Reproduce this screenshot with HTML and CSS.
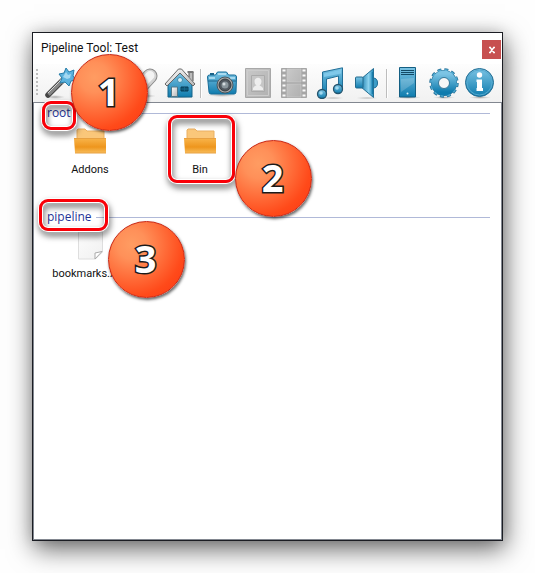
FILE: index.html
```html
<!DOCTYPE html>
<html lang="en">
<head>
<meta charset="utf-8">
<title>Pipeline Tool: Test</title>
<link rel="stylesheet" href="styles.css">
</head>
<body>
<svg class="defs" width="0" height="0" aria-hidden="true">
  <defs>
    <linearGradient id="blue" x1="0" y1="0" x2="0" y2="1"><stop offset="0" stop-color="#7cc4e4"/><stop offset="1" stop-color="#0f7cae"/></linearGradient>
    <linearGradient id="blueH" x1="0" y1="0" x2="1" y2="0"><stop offset="0" stop-color="#1c7fae"/><stop offset=".6" stop-color="#8bd2ee"/><stop offset="1" stop-color="#1b86b8"/></linearGradient>
    <linearGradient id="grey" x1="0" y1="0" x2="1" y2="1"><stop offset="0" stop-color="#c9c9c9"/><stop offset="1" stop-color="#b0b0b0"/></linearGradient>
    <linearGradient id="metal" x1="0" y1="0" x2="1" y2="1"><stop offset="0" stop-color="#ffffff"/><stop offset="1" stop-color="#b5b5b5"/></linearGradient>
    <linearGradient id="folderFront" x1="0" y1="0" x2="0" y2="1"><stop offset="0" stop-color="#f9b54c"/><stop offset=".6" stop-color="#ee961d"/><stop offset="1" stop-color="#f8bd5a"/></linearGradient>
    <linearGradient id="paper" x1="0" y1="0" x2="1" y2="1"><stop offset="0" stop-color="#fcfcfc"/><stop offset="1" stop-color="#f0f0f0"/></linearGradient>
    <radialGradient id="ground"><stop offset="0" stop-color="#777" stop-opacity=".6"/><stop offset="1" stop-color="#999" stop-opacity="0"/></radialGradient>
    <symbol id="folder" viewBox="0 0 32 28">
      <path d="M3 11V2l1-1h7l2 2h17v8z" fill="#fac77a" stroke="#eab062"/>
      <path d="M0 10h32v15H1z" fill="url(#folderFront)"/>
      <path d="M0 10.500h32M1 25h31" stroke="#e8a143" fill="none"/>
    </symbol>
  </defs>
</svg>

<main class="window">
  <header class="titlebar">
    <h1 class="title">Pipeline Tool: Test</h1>
    <button class="close" type="button" aria-label="Close"><svg viewBox="0 0 8 8" width="8" height="8"><path d="M1 1.500h2M5 1.500h2M1 6.500h2M5 6.500h2M2.200 1.500l3.600 5M5.800 1.500l-3.600 5" stroke="#fff" stroke-width="1.400"/></svg></button>
  </header>

  <nav class="toolbar" aria-label="Tools">
    <span class="grip"></span>
    <button class="tool" type="button" aria-label="Wizard"><svg viewBox="0 0 32 32">
      <ellipse cx="11" cy="30" rx="10" ry="2" fill="url(#ground)"/>
      <path d="M4 28L20 12" stroke="#444" stroke-width="5.500" stroke-linecap="round"/><path d="M4.500 27.500L20 12" stroke="#858585" stroke-width="3.500"/><path d="M4 26L18 12" stroke="#d5d5d5" stroke-width="1"/><path d="M17 15l4-4" stroke="#eee" stroke-width="4"/>
      <path d="M22 1l3 4 5-2-1 6 3 4-5 1-2 5-4-4-5 1 2-5-3-4 5-1z" fill="#5bb2de" stroke="#277da9"/><path d="M22 5l2 3 3-1-1 4-3 1-4-2z" fill="#a3d8f1"/></svg></button>
    <span class="divider"></span>
    <button class="tool" type="button" aria-label="Brush"><svg viewBox="0 0 32 32"><path d="M24 7L13 19" stroke="#999" stroke-width="4"/><path d="M13 17c-6-1-6 8-8 7 6 4 12 0 11-4z" fill="url(#blue)"/></svg></button>
    <span class="divider"></span>
    <button class="tool" type="button" aria-label="Eraser"><svg viewBox="0 0 32 32"><ellipse cx="16" cy="29" rx="12" ry="2" fill="url(#ground)"/><path d="M22 9L10 22" stroke="#8c8c8c" stroke-width="15" stroke-linecap="round"/><path d="M22 9L10 22" stroke="#d2d2d2" stroke-width="13" stroke-linecap="round"/><path d="M22 8.500L9 22" stroke="#f3f3f3" stroke-width="9" stroke-linecap="round"/></svg></button>
    <button class="tool" type="button" aria-label="Home"><svg viewBox="0 0 32 32">
      <ellipse cx="16" cy="30" rx="16" ry="1.500" fill="url(#ground)"/>
      <path d="M25 10V5h4v9" fill="#bbb" stroke="#555"/><path d="M23.500 5h6" stroke="#777" stroke-width="2"/>
      <path d="M4 17L16 5l12 12v13H4z" fill="url(#blue)" stroke="#176589"/>
      <path d="M1 17L14.500 2h3L31 17l-2 2L16 6 3 19z" fill="url(#metal)" stroke="#686868"/>
      <circle cx="16" cy="13" r="2.500" fill="#d5edf6" stroke="#438eac"/>
      <path d="M7.500 20h6v9.500h-6z" fill="url(#metal)" stroke="#507788"/><path d="M17 20h7v4h-7z" fill="#075477" stroke="#0b3d57"/><path d="M20.500 20v4M17 22h7" stroke="#276c8b" stroke-width=".6"/></svg></button>
    <span class="divider"></span>
    <button class="tool" type="button" aria-label="Camera"><svg viewBox="0 0 32 32">
      <ellipse cx="16" cy="28" rx="15" ry="2" fill="url(#ground)"/>
      <path d="M1.500 10q0-2 2-2h6l2-3h9l2 3h6q2 0 2 2l-.500 15q0 2-2 2h-23q-2 0-2-2z" fill="url(#blue)" stroke="#176c98"/>
      <path d="M12 7h8M3 11h6M24 11h5" stroke="#bde5f5" stroke-width="1.500"/><path d="M4 7h4" stroke="#1a6288" stroke-width="2"/><path d="M2 14h28" stroke="#1b668d"/>
      <circle cx="19" cy="18" r="8" fill="#aaa" stroke="#4b5860"/><circle cx="19" cy="18" r="6" fill="#50585f" stroke="#353c40"/><circle cx="19" cy="18" r="3.500" fill="#8a969c"/><circle cx="18" cy="17" r="1.500" fill="#d4dbde"/></svg></button>
    <button class="tool" type="button" aria-label="Portrait"><svg viewBox="0 0 32 32"><path d="M3.500 1.500h25v29h-25z" fill="url(#grey)" stroke="#a8a8a8"/><path d="M5.500 3.500h21v25h-21z" fill="none" stroke="#ccc"/><path d="M9.500 8.500h13v16h-13z" fill="#c6c6c6" stroke="#aaa"/><path d="M11 23v-2q2-2.500 3.500-2.500-2-1.500-2-4c0-5 7-5 7 0q0 2.500-2 4 1.500 0 3.500 2.500v2z" fill="#eee"/></svg></button>
    <button class="tool" type="button" aria-label="Film"><svg viewBox="0 0 32 32"><path d="M3.500 1.500h25v29h-25z" fill="#a6a6a6" stroke="#a6a6a6"/><path d="M9 2h14v13H9zM9 17h14v13H9z" fill="url(#grey)" stroke="#ccc" stroke-width=".6"/><path d="M6 2.500v28M26 2.500v28" stroke="#fafafa" stroke-width="3" stroke-dasharray="2 3"/></svg></button>
    <button class="tool" type="button" aria-label="Music"><svg viewBox="0 0 32 32">
      <ellipse cx="19" cy="31" rx="12" ry="1" fill="url(#ground)"/>
      <path d="M8.500 5L28.500.800V22h-4V9l-12 3v15h-4z" fill="url(#blue)" stroke="#226f98"/><path d="M10 6.500l17-3.700v3.600L10 10z" fill="#80c9ea"/><circle cx="8" cy="27" r="4.500" fill="url(#blue)" stroke="#24536c" stroke-width="1.300"/><circle cx="24" cy="22" r="4.500" fill="url(#blue)" stroke="#24536c" stroke-width="1.300"/><circle cx="7" cy="26" r="1.800" fill="#a2d9f0"/><circle cx="23" cy="21" r="1.800" fill="#a2d9f0"/></svg></button>
    <button class="tool" type="button" aria-label="Sound"><svg viewBox="0 0 32 32">
      <ellipse cx="17" cy="31" rx="12" ry="1" fill="url(#ground)"/>
      <path d="M23 11q4.500 0 4.500 5T23 21z" fill="#3c9dc8" stroke="#1b6b95"/><path d="M11 12L23.500 1.500v29L11 20z" fill="url(#blueH)" stroke="#246f94"/><path d="M5.500 11q0-1 1-1H12q1 0 1 1v9q0 1-1 1H6.500q-1 0-1-1z" fill="url(#blue)" stroke="#226a8d"/><path d="M22.500 5v22" stroke="#187ba9" stroke-width="1.500"/></svg></button>
    <span class="divider"></span>
    <button class="tool" type="button" aria-label="Server"><svg viewBox="0 0 32 32"><ellipse cx="16" cy="30.500" rx="13" ry="1.500" fill="url(#ground)"/><path d="M7.500.500h16v29.500h-16z" fill="url(#blue)" stroke="#145f83"/><path d="M9 3.500h13M9 5.500h13M9 7.500h13" stroke="#134a65" stroke-width="1"/><path d="M9 12l13-1v5L9 25z" fill="#fff" opacity=".18"/><circle cx="15.500" cy="26.500" r="1" fill="#d8f2fc"/></svg></button>
    <button class="tool" type="button" aria-label="Settings"><svg viewBox="0 0 32 32"><ellipse cx="16" cy="30.500" rx="11" ry="1.500" fill="url(#ground)"/><circle cx="16" cy="16" r="13" fill="none" stroke="#236f96" stroke-width="3.400" stroke-dasharray="3.800 3.007"/><circle cx="16" cy="16" r="9" fill="none" stroke="#236f96" stroke-width="8"/><circle cx="16" cy="16" r="13" fill="none" stroke="#4ca5cc" stroke-width="2" stroke-dasharray="3 3.807" stroke-dashoffset="-.4"/><circle cx="16" cy="16" r="9" fill="none" stroke="url(#blue)" stroke-width="7"/><circle cx="16" cy="16" r="5.500" fill="#f8f8f8" stroke="#37799a"/></svg></button>
    <button class="tool" type="button" aria-label="Information"><svg viewBox="0 0 32 32"><ellipse cx="16" cy="30.500" rx="11" ry="1.500" fill="url(#ground)"/><circle cx="15.500" cy="15.500" r="14" fill="url(#blue)" stroke="#206b91"/><circle cx="15.500" cy="15.500" r="12.500" fill="none" stroke="#55a9cf"/><circle cx="15.500" cy="8" r="2.700" fill="#fff"/><path d="M12.500 12.500h5.500v8.500h1V24h-6.500v-3H13v-6h-.500z" fill="#fff"/></svg></button>
  </nav>

  <div class="list">
    <section class="group">
      <h2 class="group-name">root</h2>
      <ul class="items">
        <li class="item"><svg class="pic"><use href="#folder"/></svg><span>Addons</span></li>
        <li class="item"><svg class="pic"><use href="#folder"/></svg><span>Bin</span></li>
      </ul>
    </section>
    <section class="group">
      <h2 class="group-name">pipeline</h2>
      <ul class="items">
        <li class="item"><svg class="pic" viewBox="0 0 32 28"><path d="M4.500 0h24v20l-7 7h-17z" fill="url(#paper)" stroke="#dedede"/><path d="M21 27v-6l7-1.500z" fill="#fff" stroke="#aaa"/></svg><span>bookmarks.xml</span></li>
      </ul>
    </section>
  </div>

  <div class="ring ring-root"></div>
  <div class="ring ring-bin"></div>
  <div class="ring ring-pipeline"></div>
  <div class="badge badge-root">1</div>
  <div class="badge badge-bin">2</div>
  <div class="badge badge-pipeline">3</div>
</main>
</body>
</html>
```
FILE: styles.css
```css
* { box-sizing: border-box; }

body {
  margin: 0;
  padding: 32px;
  background: #fefefe;
  color: #111;
  font: 11px/16px Roboto, "Liberation Sans", sans-serif;
}

.defs { position: absolute; }

.window {
  position: relative;
  display: flex;
  flex-direction: column;
  min-height: calc(100vh - 64px);
  background: #fff;
  border: 1px solid #1b1d23;
  box-shadow: 2px 8px 24px rgba(0, 0, 0, .6), 0 0 12px rgba(0, 0, 0, .1);
}

.titlebar {
  display: flex;
  align-items: flex-start;
  justify-content: space-between;
  height: 31px;
  padding: 7px 1px 0 8px;
}

.title { margin: 0; font-size: 12px; font-weight: 400; line-height: 16px; }

.close {
  display: grid;
  place-items: center;
  width: 19px;
  height: 19px;
  padding: 0;
  border: 0;
  background: #c75050;
}

.toolbar {
  display: flex;
  align-items: center;
  gap: 4px;
  height: 38px;
  padding-left: 3px;
  background: linear-gradient(#fdfdfd, #f1f1f1);
}

.grip {
  flex: none;
  width: 2px;
  height: 28px;
  margin-right: 2px;
  background: repeating-linear-gradient(#bdbdbd 0 2px, transparent 2px 4px);
}

.tool {
  flex: none;
  width: 32px;
  height: 32px;
  padding: 0;
  border: 0;
  background: none;
}

.tool svg { display: block; width: 32px; height: 32px; }

.divider {
  flex: none;
  width: 2px;
  height: 29px;
  background: linear-gradient(90deg, #bdbdbd 50%, #fff 50%);
}

.list {
  flex: 1;
  border: 1px solid #828790;
}

.group { height: 104px; }

.group-name {
  display: flex;
  align-items: center;
  gap: 4px;
  margin: 0;
  padding: 0 11px 0 13px;
  color: #1e3296;
  font: 400 12px/20px "Open Sans", "Noto Sans", sans-serif;
}

.group-name::after {
  content: "";
  flex: 1;
  height: 1px;
  background: #b0b9d8;
}

.items {
  display: flex;
  margin: 0;
  padding: 5px 0 0 1px;
  list-style: none;
}

.item {
  display: flex;
  flex-direction: column;
  align-items: center;
  gap: 6px;
  width: 110px;
}

.pic { width: 32px; height: 28px; }

.ring {
  position: absolute;
  border: 3px solid #fa0008;
  border-radius: 9px;
  box-shadow: 0 0 0 1px #fff, inset 0 0 0 1px #fff;
  filter: drop-shadow(1px 4px 3px rgba(0, 0, 0, .6));
}

.ring-root { left: 9px; top: 68px; width: 34px; height: 29px; }
.ring-bin { left: 135px; top: 82px; width: 67px; height: 68px; }
.ring-pipeline { left: 6px; top: 166px; width: 69px; height: 32px; }

.badge {
  position: absolute;
  width: 77px;
  height: 77px;
  padding-right: 2px;
  border: 1px solid #c82512;
  border-radius: 50%;
  background: radial-gradient(circle at 30% 30%, #ff9c62 0%, #ff9059 20%, #ff4a1a 70%, #fb3510 100%);
  box-shadow: 1px 2px 3px rgba(0, 0, 0, .6);
  color: #fff;
  font: 700 38px/73px "Open Sans", sans-serif;
  text-align: center;
  -webkit-text-stroke: 3px #1b1b1b;
  paint-order: stroke fill;
}

.badge-root { left: 38px; top: 21px; }
.badge-bin { left: 202px; top: 107px; }
.badge-pipeline { left: 75px; top: 188px; }
```
